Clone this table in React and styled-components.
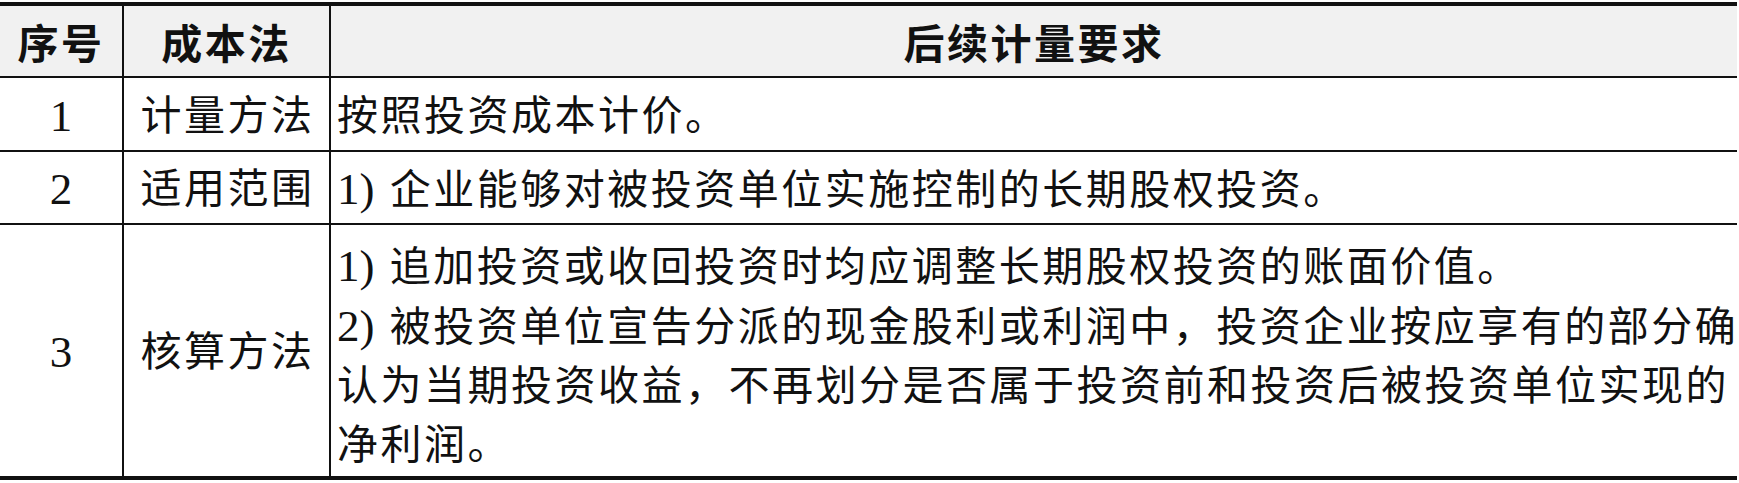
import React from "react";
import styled, { createGlobalStyle } from "styled-components";

const GlobalStyle = createGlobalStyle`
  html, body {
    margin: 0;
    padding: 0;
    background: #ffffff;
  }
  body {
    font-family: "Liberation Serif", "Noto Sans CJK SC", serif;
    color: #111111;
  }
`;

const Page = styled.div`
  width: 1739px;
  height: 483px;
  padding-top: 2px;
  box-sizing: border-box;
  background: #ffffff;
`;

const Table = styled.div`
  width: 1737px;
  display: grid;
  grid-template-columns: 122px 205px 1406px;
  grid-template-rows: 70px 72px 71px 251px;
  gap: 2px;
  background: #111111;
  border-top: 4px solid #111111;
  border-bottom: 4px solid #111111;
`;

const Cell = styled.div`
  display: flex;
  align-items: center;
  background: ${(p) => (p.$head ? "#f1f1f1" : "#ffffff")};
  font-family: "Liberation Serif", "Noto Sans CJK SC", serif;
  font-size: 41px;
  letter-spacing: 2.5px;
  line-height: 1;
  color: #111111;
  overflow: hidden;
`;

const HeadCell = styled(Cell).attrs({ $head: true })`
  justify-content: center;
  font-weight: 700;
  padding-top: 8px;
  box-sizing: border-box;
`;

const IndexCell = styled(Cell)`
  justify-content: center;
  font-size: 45px;
  letter-spacing: 0;
  padding-top: 4px;
  box-sizing: border-box;
`;

const NameCell = styled(Cell)`
  justify-content: center;
  padding-top: 4px;
  padding-left: 2px;
  box-sizing: border-box;
`;

const BodyCell = styled(Cell)`
  flex-direction: column;
  align-items: flex-start;
  justify-content: ${(p) => (p.$top ? "flex-start" : "center")};
  padding: ${(p) => (p.$top ? "12px 0 0 6px" : "4px 0 0 6px")};
  box-sizing: border-box;
`;

const Line = styled.div`
  white-space: nowrap;
  line-height: ${(p) => (p.$tall ? "59px" : "1")};
`;

const Num = styled.span`
  font-size: 45px;
  letter-spacing: 0;
  margin-right: 4px;
`;

const rows = [
  { no: "1", name: "计量方法", lines: [["", "按照投资成本计价。"]] },
  { no: "2", name: "适用范围", lines: [["1)", "企业能够对被投资单位实施控制的长期股权投资。"]] },
  {
    no: "3",
    name: "核算方法",
    lines: [
      ["1)", "追加投资或收回投资时均应调整长期股权投资的账面价值。"],
      ["2)", "被投资单位宣告分派的现金股利或利润中，投资企业按应享有的部分确"],
      ["", "认为当期投资收益，不再划分是否属于投资前和投资后被投资单位实现的"],
      ["", "净利润。"],
    ],
  },
];

export default function App() {
  return (
    <>
      <GlobalStyle />
      <Page>
        <Table>
          <HeadCell>序号</HeadCell>
          <HeadCell>成本法</HeadCell>
          <HeadCell>后续计量要求</HeadCell>
          {rows.map((r) => {
            const multi = r.lines.length > 1;
            return (
              <React.Fragment key={r.no}>
                <IndexCell>{r.no}</IndexCell>
                <NameCell>{r.name}</NameCell>
                <BodyCell $top={multi}>
                  {r.lines.map(([num, text], i) => (
                    <Line key={i} $tall={multi}>
                      {num && <Num>{num} </Num>}
                      {text}
                    </Line>
                  ))}
                </BodyCell>
              </React.Fragment>
            );
          })}
        </Table>
      </Page>
    </>
  );
}
